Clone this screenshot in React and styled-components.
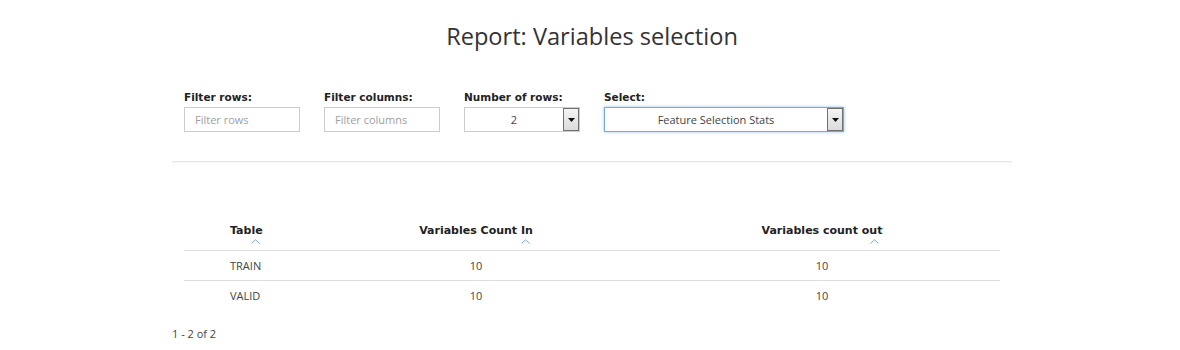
import React from 'react'
import styled, { createGlobalStyle } from 'styled-components'

const GlobalStyle = createGlobalStyle`
  body {
    margin: 0;
    background: #ffffff;
    font-family: "Open Sans", "Liberation Sans", sans-serif;
    color: #333333;
  }
`;

const Page = styled.div`
  width: 840px;
  margin: 0 auto;
  padding: 20px 0 0 4px;
`;

const Title = styled.h1`
  margin: 0;
  text-align: center;
  font-size: 23.6px;
  font-weight: 400;
  line-height: 32px;
  color: #333333;
`;

const Filters = styled.div`
  display: flex;
  gap: 24px;
  padding: 39px 12px 29px;
  border-bottom: 1px solid #e6e6e6;
  box-shadow: 0 1px 1px #f6f6f6;
`;

const Field = styled.div`
  display: flex;
  flex-direction: column;
  gap: 3px;
`;

const Label = styled.label`
  font-family: "DejaVu Sans", Verdana, sans-serif;
  font-size: 10.5px;
  font-weight: 700;
  color: #222222;
  line-height: 13px;
`;

const TextInput = styled.input`
  box-sizing: border-box;
  width: 116px;
  height: 25px;
  padding: 0 10px;
  border: 1px solid #cccccc;
  font-family: "Open Sans", sans-serif;
  font-size: 11px;
  color: #333;
  outline: none;
  &::placeholder { color: #a0a0a0; }
`;

const SelectBox = styled.div`
  box-sizing: border-box;
  width: ${p => p.$width}px;
  height: 25px;
  display: flex;
  align-items: center;
  border: 1px solid ${p => p.$focus ? '#7ea6de' : '#cccccc'};
  box-shadow: ${p => p.$focus ? '0 0 3px rgba(90, 150, 230, 0.6)' : 'none'};
  font-size: 11px;
  color: #444444;
  background: #fff;
`;

const SelectValue = styled.span`
  flex: 1;
  text-align: center;
`;

const ArrowButton = styled.span`
  box-sizing: border-box;
  width: 16px;
  height: 23px;
  display: flex;
  align-items: center;
  justify-content: center;
  border: 1px solid #707070;
  background: linear-gradient(#f4f4f4, #dcdcdc);
`;

const Arrow = () => (
  <svg width="7" height="4" viewBox="0 0 7 4"><path d="M0 0h7L3.5 4z" fill="#111" /></svg>
);

const TableWrap = styled.div`
  padding: 54px 12px 0;
`;

const Table = styled.table`
  width: 816px;
  table-layout: fixed;
  border-collapse: collapse;
  font-size: 11px;
  color: #444444;
`;

const Th = styled.th`
  height: 34px;
  padding: 0 0 0 ${p => p.$pad || 0}px;
  text-align: ${p => p.$align || 'center'};
  vertical-align: top;
  font-family: "DejaVu Sans", Verdana, sans-serif;
  font-size: 11px;
  font-weight: 700;
  color: #222222;
  border-bottom: 1px solid #dddddd;
`;

const HeadLabel = styled.span`
  position: relative;
  display: inline-block;
  padding-top: 8px;
`;

const SortCaret = styled.svg`
  position: absolute;
  right: 3px;
  top: 23px;
`;

const Td = styled.td`
  height: 29px;
  padding: 0 0 0 ${p => p.$pad || 0}px;
  text-align: ${p => p.$align || 'center'};
  border-bottom: ${p => p.$last ? 'none' : '1px solid #dddddd'};
`;

const Footer = styled.div`
  padding: 16px 0 0;
  font-size: 11px;
  color: #444444;
`;

const columns = [
  { key: 'table', title: 'Table', width: 124, align: 'left', pad: 46 },
  { key: 'in', title: 'Variables Count In', width: 336 },
  { key: 'out', title: 'Variables count out', width: 356 },
];

const rows = [
  { table: 'TRAIN', in: 10, out: 10 },
  { table: 'VALID', in: 10, out: 10 },
];

export default function App() {
  return (
    <>
      <GlobalStyle />
      <Page>
        <Title>Report: Variables selection</Title>
        <Filters>
          <Field>
            <Label>Filter rows:</Label>
            <TextInput placeholder="Filter rows" />
          </Field>
          <Field>
            <Label>Filter columns:</Label>
            <TextInput placeholder="Filter columns" />
          </Field>
          <Field>
            <Label>Number of rows:</Label>
            <SelectBox $width={116}>
              <SelectValue>2</SelectValue>
              <ArrowButton><Arrow /></ArrowButton>
            </SelectBox>
          </Field>
          <Field>
            <Label>Select:</Label>
            <SelectBox $width={240} $focus>
              <SelectValue>Feature Selection Stats</SelectValue>
              <ArrowButton><Arrow /></ArrowButton>
            </SelectBox>
          </Field>
        </Filters>
        <TableWrap>
          <Table>
            <colgroup>
              {columns.map(c => <col key={c.key} style={{ width: c.width }} />)}
            </colgroup>
            <thead>
              <tr>
                {columns.map(c => (
                  <Th key={c.key} $align={c.align} $pad={c.pad}>
                    <HeadLabel>
                      {c.title}
                      <SortCaret width="9" height="5" viewBox="0 0 9 5">
                        <path d="M0.5 4.5L4.5 0.8L8.5 4.5" fill="none" stroke="#7ba6da" strokeWidth="1" />
                      </SortCaret>
                    </HeadLabel>
                  </Th>
                ))}
              </tr>
            </thead>
            <tbody>
              {rows.map((r, i) => (
                <tr key={r.table}>
                  {columns.map(c => (
                    <Td key={c.key} $align={c.align} $pad={c.pad} $last={i === rows.length - 1}>
                      {r[c.key]}
                    </Td>
                  ))}
                </tr>
              ))}
            </tbody>
          </Table>
        </TableWrap>
        <Footer>1 - 2 of 2</Footer>
      </Page>
    </>
  )
}
